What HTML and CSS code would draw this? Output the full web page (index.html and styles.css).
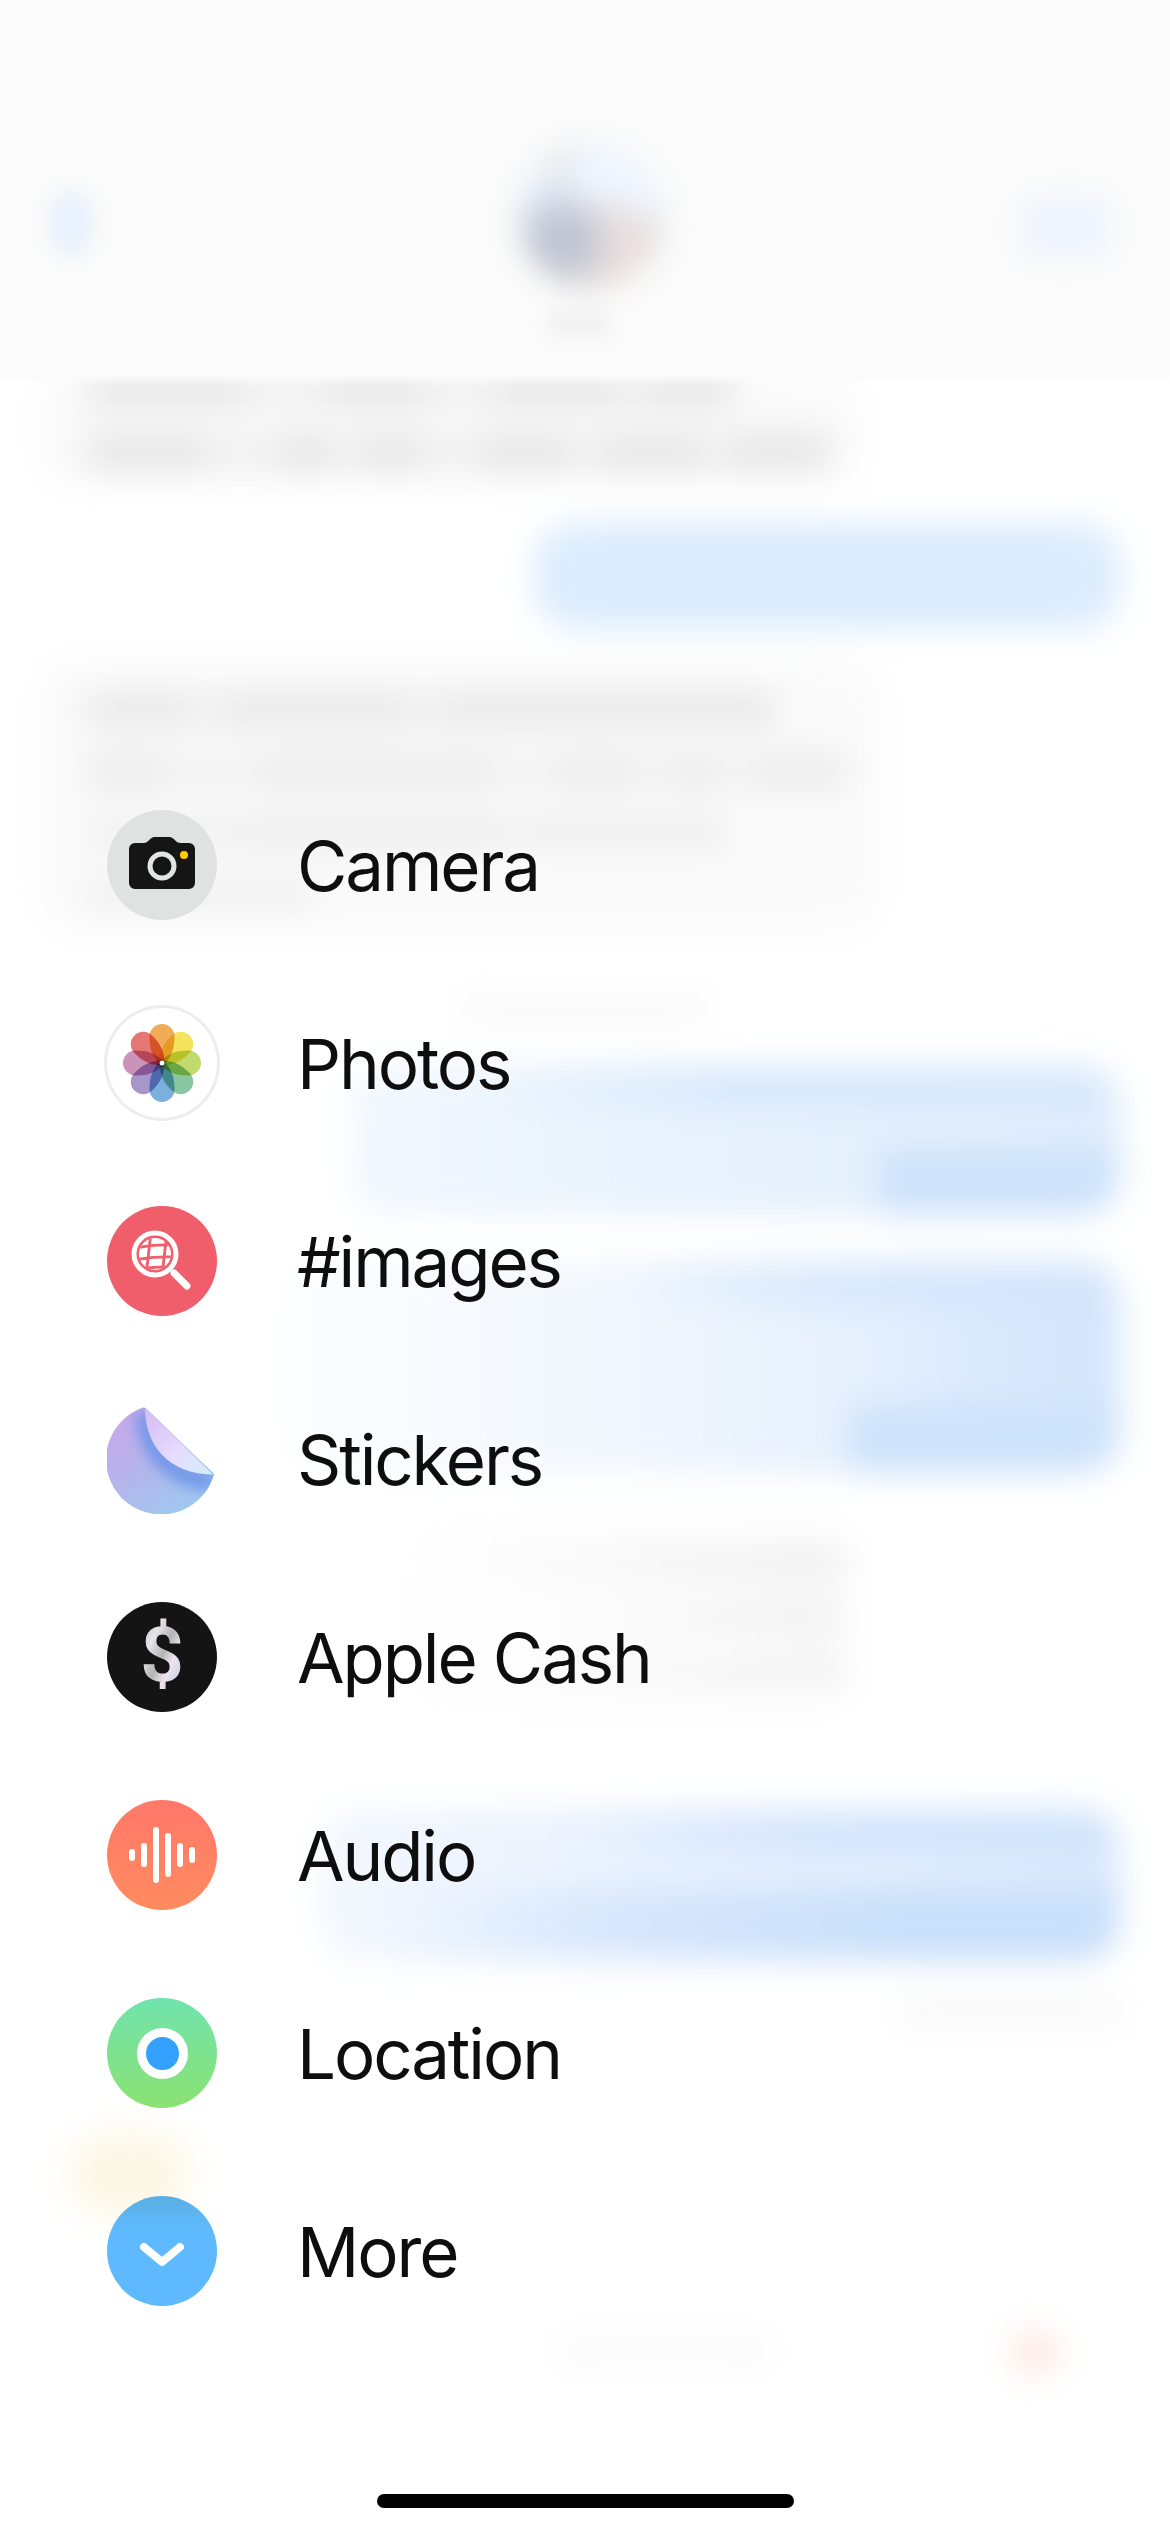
FILE: index.html
```html
<!DOCTYPE html>
<html lang="en">
<head>
<meta charset="utf-8">
<title>Messages apps menu</title>
<link rel="stylesheet" href="styles.css">
</head>
<body>
<main class="screen">
  <div class="backdrop" aria-hidden="true">
    <header class="chat-head">
      <span class="back"></span>
      <div class="contact">
        <span class="avatar"></span>
        <span class="contact-name"></span>
      </div>
      <span class="video"></span>
    </header>
    <div class="thread">
      <div class="bubble in in-a"><i class="ln w1"></i><i class="ln w2"></i></div>
      <div class="bubble out out-a"></div>
      <div class="bubble in in-b"><i class="ln w3"></i><i class="ln w4"></i><i class="ln w5"></i><i class="ln w6"></i></div>
      <div class="stamp"></div>
      <div class="bubble out out-b"></div>
      <div class="bubble out out-c"></div>
      <div class="bubble in in-c"><i class="ln w7"></i><i class="ln w8"></i><i class="ln w9"></i></div>
      <div class="bubble out out-d"></div>
      <div class="delivered"></div>
      <div class="composer">
        <span class="sticker-blob"></span>
        <span class="field-text"></span>
        <span class="mic-blob"></span>
      </div>
    </div>
  </div>

  <nav class="menu">
    <a class="row">
      <span class="disc disc-camera">
        <svg viewBox="0 0 110 110" width="110" height="110">
          <path d="M22 39a6 6 0 0 1 6-6h8.500c2 0 3.500-.8 4.700-2 2-2 3.800-4 6.800-4h14c3 0 4.800 2 6.800 4 1.200 1.200 2.700 2 4.700 2H82a6 6 0 0 1 6 6v34a6 6 0 0 1-6 6H28a6 6 0 0 1-6-6z" fill="#151515"/>
          <circle cx="55" cy="56" r="12" fill="none" stroke="#e3e4e4" stroke-width="5"/>
          <circle cx="77" cy="45" r="4" fill="#ffcc00"/>
        </svg>
      </span>
      <span class="label">Camera</span>
    </a>
    <a class="row">
      <span class="disc disc-photos">
        <svg viewBox="0 0 110 110" width="110" height="110">
          <g class="petals">
            <path d="M55 58C45 50 42.500 40 42.500 28.500a12.500 12.500 0 0 1 25 0C67.500 40 65 50 55 58z" fill="#efa547"/>
            <path d="M55 58C45 50 42.500 40 42.500 28.500a12.500 12.500 0 0 1 25 0C67.500 40 65 50 55 58z" fill="#f3e24f" transform="rotate(45 55 55)"/>
            <path d="M55 58C45 50 42.500 40 42.500 28.500a12.500 12.500 0 0 1 25 0C67.500 40 65 50 55 58z" fill="#bcd660" transform="rotate(90 55 55)"/>
            <path d="M55 58C45 50 42.500 40 42.500 28.500a12.500 12.500 0 0 1 25 0C67.500 40 65 50 55 58z" fill="#80c09a" transform="rotate(135 55 55)"/>
            <path d="M55 58C45 50 42.500 40 42.500 28.500a12.500 12.500 0 0 1 25 0C67.500 40 65 50 55 58z" fill="#6fa8dc" transform="rotate(180 55 55)"/>
            <path d="M55 58C45 50 42.500 40 42.500 28.500a12.500 12.500 0 0 1 25 0C67.500 40 65 50 55 58z" fill="#9e8dc6" transform="rotate(225 55 55)"/>
            <path d="M55 58C45 50 42.500 40 42.500 28.500a12.500 12.500 0 0 1 25 0C67.500 40 65 50 55 58z" fill="#c58ab4" transform="rotate(270 55 55)"/>
            <path d="M55 58C45 50 42.500 40 42.500 28.500a12.500 12.500 0 0 1 25 0C67.500 40 65 50 55 58z" fill="#e46b6b" transform="rotate(315 55 55)"/>
          </g>
          <circle cx="55" cy="55" r="2.500" fill="#fff"/>
        </svg>
      </span>
      <span class="label">Photos</span>
    </a>
    <a class="row">
      <span class="disc disc-images">
        <svg viewBox="0 0 110 110" width="110" height="110">
          <defs><clipPath id="globe"><circle cx="48" cy="48" r="16"/></clipPath></defs>
          <circle cx="48" cy="48" r="21" fill="none" stroke="#fff" stroke-width="5"/>
          <g clip-path="url(#globe)">
            <rect x="28" y="28" width="40" height="40" fill="#fff"/>
            <g fill="none" stroke="#f05d6b" stroke-width="2.800">
              <path d="M28 42q20 -4 40 -3"/>
              <path d="M28 54q20 -4 40 -3"/>
              <path d="M28 64q20 -4 40 -3"/>
              <path d="M44 26l-5 44"/>
              <path d="M60 26l-5 44"/>
            </g>
          </g>
          <path d="M67 67l13 13" fill="none" stroke="#fff" stroke-width="7" stroke-linecap="round"/>
        </svg>
      </span>
      <span class="label">#images</span>
    </a>
    <a class="row">
      <span class="disc disc-stickers">
        <svg viewBox="0 0 110 110" width="110" height="110">
          <defs>
            <linearGradient id="stickerBody" x1="0.100" y1="0.150" x2="0.650" y2="1">
              <stop offset="0" stop-color="#c6aaea"/>
              <stop offset="0.450" stop-color="#b6b4ea"/>
              <stop offset="1" stop-color="#9fc8ef"/>
            </linearGradient>
            <linearGradient id="stickerFlap" x1="0.050" y1="0" x2="0.950" y2="0.900">
              <stop offset="0" stop-color="#d4bcf5"/>
              <stop offset="0.600" stop-color="#e6dcfd"/>
              <stop offset="1" stop-color="#d6ecfc"/>
            </linearGradient>
            <filter id="soft" x="-30%" y="-30%" width="160%" height="160%"><feGaussianBlur stdDeviation="7"/></filter>
            <clipPath id="stickerClip"><path d="M36 3.500a3 3 0 0 1 3 1L106 69a2.500 2.500 0 0 1 .5 3A55 55 0 1 1 36 3.500z"/></clipPath>
          </defs>
          <path d="M36 3.500a3 3 0 0 1 3 1L106 69a2.500 2.500 0 0 1 .5 3A55 55 0 1 1 36 3.500z" fill="url(#stickerBody)"/>
          <g clip-path="url(#stickerClip)">
            <path d="M38 8C38 42 60 74 108 78" fill="none" stroke="#6f96e8" stroke-width="18" filter="url(#soft)"/>
          </g>
          <path d="M38 4L106 70.500C60 70 38 40 38 4z" fill="url(#stickerFlap)"/>
        </svg>
      </span>
      <span class="label">Stickers</span>
    </a>
    <a class="row">
      <span class="disc disc-cash">
        <svg viewBox="0 0 110 110" width="110" height="110">
          <defs>
            <linearGradient id="foil" x1="0" y1="0" x2="1" y2="1">
              <stop offset="0" stop-color="#aaa"/>
              <stop offset="0.300" stop-color="#e8e4ea"/>
              <stop offset="0.500" stop-color="#b4b4b6"/>
              <stop offset="0.650" stop-color="#efe3ec"/>
              <stop offset="0.800" stop-color="#cfd8e8"/>
              <stop offset="1" stop-color="#a4a4a6"/>
            </linearGradient>
          </defs>
          <text x="55" y="79" class="dollar" fill="url(#foil)">$</text>
        </svg>
      </span>
      <span class="label">Apple Cash</span>
    </a>
    <a class="row">
      <span class="disc disc-audio">
        <span class="bar b1"></span><span class="bar b2"></span><span class="bar b3"></span><span class="bar b4"></span><span class="bar b5"></span><span class="bar b6"></span>
      </span>
      <span class="label">Audio</span>
    </a>
    <a class="row">
      <span class="disc disc-location"><span class="pin"></span></span>
      <span class="label">Location</span>
    </a>
    <a class="row">
      <span class="disc disc-more">
        <svg viewBox="0 0 110 110" width="110" height="110">
          <path d="M37 51l18 15 18-15" fill="none" stroke="#fff" stroke-width="8" stroke-linecap="round" stroke-linejoin="round"/>
        </svg>
      </span>
      <span class="label">More</span>
    </a>
  </nav>
  <div class="home-indicator"></div>
</main>
</body>
</html>
```
FILE: styles.css
```css
* { box-sizing: border-box; }
html, body { margin: 0; padding: 0; background: #fff; }
.screen {
  position: relative;
  width: 1170px;
  height: 2532px;
  overflow: hidden;
  background: #fff;
  font-family: Inter, "Liberation Sans", sans-serif;
}

/* blurred conversation behind the menu */
.backdrop {
  position: absolute;
  inset: 0;
  display: flex;
  flex-direction: column;
}
.chat-head {
  height: 380px;
  flex: none;
  background: #fbfbfb;
  display: flex;
  justify-content: space-between;
  align-items: flex-start;
  padding: 190px 60px 0 50px;
  filter: blur(3px);
  position: relative;
  z-index: 1;
}
.back { width: 42px; height: 66px; background: #e6f0fd; border-radius: 50%; filter: blur(10px); }
.video { width: 90px; height: 62px; background: #eff4fd; border-radius: 14px; margin-top: 6px; filter: blur(12px); }
.contact { display: flex; flex-direction: column; align-items: center; margin-top: -46px; margin-left: 70px; }
.avatar {
  width: 146px; height: 146px; border-radius: 50%;
  background:
    radial-gradient(circle at 30% 66%, #bfc5d3 0 16%, transparent 40%),
    radial-gradient(circle at 62% 74%, #eadfdd 0 24%, transparent 44%),
    radial-gradient(circle at 70% 24%, #eef6ff 0 26%, transparent 44%),
    radial-gradient(circle at 14% 38%, #e8f0fb 0 12%, transparent 30%),
    #e0dfe1;
  filter: blur(14px);
}
.contact-name { width: 60px; height: 26px; margin-top: 20px; margin-right: 24px; background: #f1f1f1; filter: blur(8px); }

.thread {
  display: flex;
  flex-direction: column;
  padding: 0 50px 0 40px;
  filter: blur(16px);
}
.bubble { border-radius: 40px; display: flex; flex-direction: column; }
.out { align-self: flex-end; }
.in { background: #fafafa; align-self: flex-start; padding-left: 46px; }
.ln { display: block; height: 36px; border-radius: 14px; }

.in-a { width: 820px; height: 114px; gap: 26px; margin-top: -8px; }
.w1 {
  width: 650px;
  background: linear-gradient(90deg, #e7e7e7 0 24%, #f1f1f1 24% 37%, #e7e7e7 37% 52%, #f1f1f1 52% 63%, #e7e7e7 63% 82%, #efefef 82% 86%, #e7e7e7 86%);
}
.w2 {
  width: 745px;
  background: linear-gradient(90deg, #e6e6e6 0 16%, #f1f1f1 16% 26%, #e6e6e6 26% 33%, #f1f1f1 33% 37%, #e6e6e6 37% 45%, #f1f1f1 45% 53%, #e6e6e6 53% 65%, #f1f1f1 65% 69%, #e6e6e6 69% 83%, #f1f1f1 83% 86%, #e6e6e6 86%);
}
.out-a { width: 585px; height: 106px; margin-top: 37px; background: #dbecfd; }
.in-b { width: 840px; height: 270px; margin-top: 32px; padding-top: 31px; gap: 25px; }
.w3 {
  width: 690px;
  background: linear-gradient(90deg, #e9e9e9 0 15%, #f1f1f1 15% 20%, #e9e9e9 20% 46%, #efefef 46% 52%, #e9e9e9 52%);
}
.w4 {
  width: 760px;
  background: linear-gradient(90deg, #ececec 0 10%, #f3f3f3 10% 23%, #ececec 23% 53%, #f3f3f3 53% 62%, #ececec 62% 72%, #f3f3f3 72% 77%, #ececec 77% 83%, #f3f3f3 83% 88%, #ececec 88%);
}
.w5 {
  width: 640px;
  background: linear-gradient(90deg, #f2f2f2 0 25%, #efefef 25% 65%, #f3f3f3 65% 70%, #f0f0f0 70%);
}
.w6 { width: 230px; background: #f2f2f2; }
.stamp { align-self: center; width: 240px; height: 24px; margin-top: 66px; background: #f7f7f7; transform: translateX(5px); }
.out-b {
  width: 770px; height: 150px; margin-top: 44px;
  background:
    linear-gradient(#cde2fb, #cde2fb) right bottom / 240px 64px no-repeat,
    linear-gradient(90deg, transparent 18%, #d8e9fc 50%, #d8e9fc 100%) top / 100% 44px no-repeat,
    linear-gradient(90deg, #f2f8fe 0%, #e8f2fd 45%, #dfecfc 100%);
}
.out-c {
  width: 830px; height: 212px; margin-top: 46px;
  background:
    linear-gradient(#cde2fb, #cde2fb) right bottom / 270px 66px no-repeat,
    linear-gradient(90deg, transparent 40%, #d8e8fc 68%, #d3e5fc 100%) top / 100% 46px no-repeat,
    linear-gradient(90deg, transparent, #d4e6fc) right center / 240px 100% no-repeat,
    linear-gradient(90deg, #fcfdff 0%, #f1f7fe 40%, #e3eefd 75%, #dbe9fc 100%);
}
.in-c {
  width: 470px; height: 190px; margin-top: 48px; margin-left: 340px;
  padding-left: 0; padding-top: 26px; gap: 22px; align-items: flex-end;
  background: linear-gradient(90deg, #ffffff 0%, #fcfcfc 60%);
}
.in-c .ln { height: 32px; }
.w7 { width: 400px; background: linear-gradient(90deg, #fdfdfd, #f1f1f1 85%); }
.w8 { width: 300px; background: linear-gradient(90deg, #fdfdfd, #f2f2f2 80%); }
.w9 { width: 330px; background: linear-gradient(90deg, #fdfdfd, #f3f3f3 85%); }
.out-d {
  width: 800px; height: 152px; margin-top: 98px;
  background:
    linear-gradient(90deg, transparent 8%, #d6e6fc 40%, #c9dffa 75%) bottom / 100% 72px no-repeat,
    linear-gradient(90deg, transparent 30%, #d6e6fc 60%, #d0e3fc 100%) top / 100% 46px no-repeat,
    linear-gradient(90deg, #f3f8fe 0%, #e8f1fe 45%, #dcebfd 100%);
}
.delivered { align-self: flex-end; width: 220px; height: 26px; margin-top: 36px; background: #f7f7f7; }
.composer {
  display: flex;
  align-items: flex-start;
  margin-top: 108px;
  padding-left: 30px;
}
.sticker-blob { width: 120px; height: 86px; border-radius: 40px; background: #fdf7e6; }
.field-text { width: 210px; height: 30px; margin: 205px 0 0 370px; background: #fafafa; }
.mic-blob { width: 50px; height: 46px; margin: 198px 0 0 240px; border-radius: 50%; background: #fee9e3; }

/* attachment menu */
.menu {
  position: relative;
  display: flex;
  flex-direction: column;
  gap: 88px;
  padding: 810px 0 0 107px;
}
.row { display: flex; align-items: center; height: 110px; }
.disc {
  flex: none;
  width: 110px;
  height: 110px;
  border-radius: 50%;
  display: flex;
  align-items: center;
  justify-content: center;
}
.label {
  margin: 2px 0 0 80px;
  font-size: 69px;
  font-weight: 400;
  letter-spacing: -2.1px;
  color: #0e0e0e;
  line-height: 80px;
}
.disc-camera { background: #e0e1e1; }
.disc-photos { background: #fff; box-shadow: 0 0 0 3px #ededed; }
.petals path { mix-blend-mode: multiply; opacity: 0.92; }
.disc-images { background: #f05d6b; }
.disc-stickers { background: transparent; }
.disc-cash { background: #141414; }
.dollar { font-family: Roboto, "Liberation Sans", sans-serif; font-size: 76px; font-weight: 700; text-anchor: middle; }
.disc-audio {
  gap: 6px;
  background: linear-gradient(180deg, #ff7869 0%, #ff8b60 100%);
}
.bar { width: 6px; background: #fff; border-radius: 3px; }
.b1 { height: 12px; }
.b2 { height: 24px; }
.b3 { height: 56px; }
.b4 { height: 44px; }
.b5 { height: 24px; }
.b6 { height: 16px; }
.disc-location { background: linear-gradient(180deg, #70e3ad 0%, #8be272 100%); }
.pin { width: 51px; height: 51px; border-radius: 50%; background: #33a1fd; border: 9px solid #fff; }
.disc-more { background: linear-gradient(180deg, #5aaee2 0%, #5fb9fe 30%); }
.home-indicator {
  position: absolute;
  left: 377px;
  top: 2494px;
  width: 417px;
  height: 14px;
  border-radius: 7px;
  background: #000;
}
```
